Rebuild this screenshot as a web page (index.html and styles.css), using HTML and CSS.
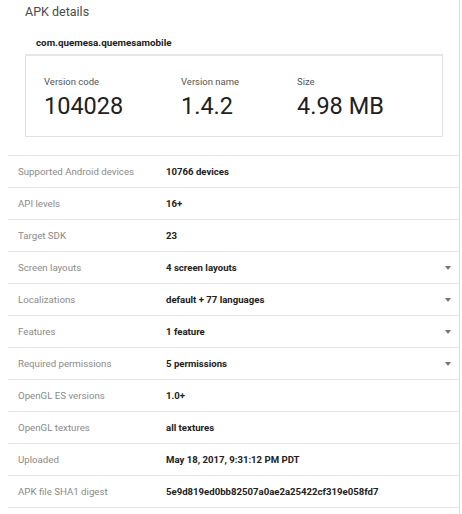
FILE: index.html
```html
<!DOCTYPE html>
<html>
<head>
<meta charset="utf-8">
<link rel="stylesheet" href="styles.css">
</head>
<body>
<div class="panel">
  <h2 class="title">APK details</h2>
  <div class="package">com.quemesa.quemesamobile</div>
  <div class="card">
    <div class="stat stat-code">
      <div class="stat-label">Version code</div>
      <div class="stat-value">104028</div>
    </div>
    <div class="stat stat-name">
      <div class="stat-label">Version name</div>
      <div class="stat-value">1.4.2</div>
    </div>
    <div class="stat">
      <div class="stat-label">Size</div>
      <div class="stat-value">4.98 MB</div>
    </div>
  </div>
  <div class="rows">
    <div class="row"><div class="label">Supported Android devices</div><div class="value">10766 devices</div></div>
    <div class="row"><div class="label">API levels</div><div class="value">16+</div></div>
    <div class="row"><div class="label">Target SDK</div><div class="value">23</div></div>
    <div class="row"><div class="label">Screen layouts</div><div class="value">4 screen layouts</div><span class="caret"></span></div>
    <div class="row"><div class="label">Localizations</div><div class="value">default + 77 languages</div><span class="caret"></span></div>
    <div class="row"><div class="label">Features</div><div class="value">1 feature</div><span class="caret"></span></div>
    <div class="row"><div class="label">Required permissions</div><div class="value">5 permissions</div><span class="caret"></span></div>
    <div class="row"><div class="label">OpenGL ES versions</div><div class="value">1.0+</div></div>
    <div class="row"><div class="label">OpenGL textures</div><div class="value">all textures</div></div>
    <div class="row"><div class="label">Uploaded</div><div class="value">May 18, 2017, 9:31:12 PM PDT</div></div>
    <div class="row"><div class="label">APK file SHA1 digest</div><div class="value">5e9d819ed0bb82507a0ae2a25422cf319e058fd7</div></div>
  </div>
</div>
</body>
</html>
```
FILE: styles.css
```css
html, body {
  margin: 0;
  padding: 0;
  background: #fff;
}
body {
  font-family: Roboto, "Liberation Sans", Arial, sans-serif;
  color: #212121;
}
.panel {
  margin-left: 8px;
  width: 452px;
  min-height: 514px;
  border-right: 1px solid #dcdcdc;
  box-sizing: border-box;
}
.title {
  margin: 0;
  padding: 4px 0 0 17px;
  font-size: 12.5px;
  line-height: 16px;
  font-weight: 400;
  color: #4a4a4a;
}
.package {
  margin: 17px 0 0 28px;
  font-size: 9.8px;
  line-height: 12px;
  font-weight: 700;
  color: #212121;
}
.card {
  margin: 5px 0 0 17px;
  width: 418px;
  height: 83px;
  box-sizing: border-box;
  border: 1px solid #e2e2e2;
  border-top: 2px solid #e6e6e6;
  display: flex;
  padding: 20px 0 0 18px;
}
.stat-code { width: 137px; }
.stat-name { width: 116px; }
.stat-label {
  font-size: 9.5px;
  line-height: 12px;
  color: #555;
}
.stat-value {
  margin-top: 4px;
  font-size: 23.5px;
  line-height: 28px;
  color: #212121;
}
.rows {
  margin-top: 18px;
  border-top: 1px solid #e4e4e4;
  width: 451px;
}
.row {
  height: 31px;
  border-bottom: 1px solid #e4e4e4;
  display: flex;
  align-items: center;
  font-size: 9.7px;
}
.label {
  width: 148px;
  padding-left: 10px;
  color: #8a8a8a;
  flex: none;
}
.value {
  flex: 1;
  font-weight: 700;
  font-size: 9.6px;
  color: #212121;
}
.caret {
  width: 0;
  height: 0;
  border-left: 3.5px solid transparent;
  border-right: 3.5px solid transparent;
  border-top: 4px solid #777;
  margin-right: 8px;
}
```
